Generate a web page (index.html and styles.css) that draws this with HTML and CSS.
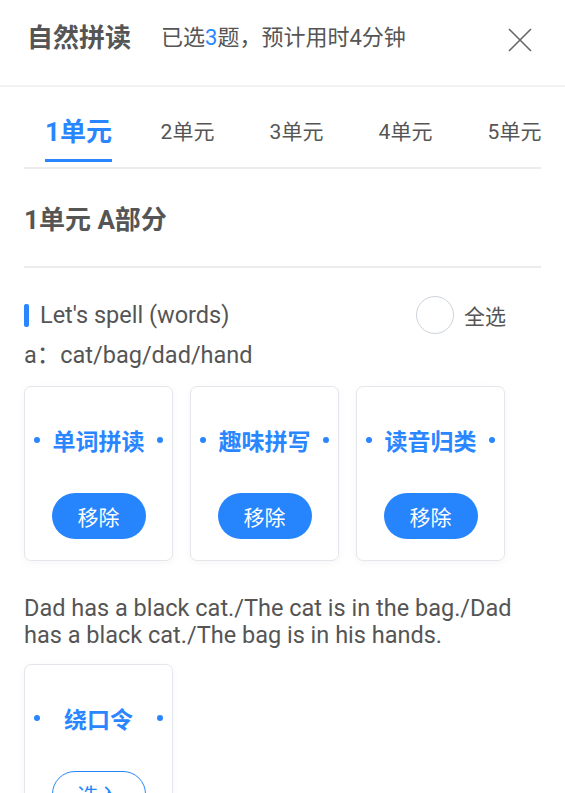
FILE: index.html
```
<!DOCTYPE html>
<html lang="zh">
<head>
<meta charset="utf-8">
<link rel="stylesheet" href="styles.css">
</head>
<body>
<div class="page">
  <header class="header">
    <h1 class="title">自然拼读</h1>
    <div class="sub">已选<span class="num">3</span>题，预计用时4分钟</div>
    <svg class="close" width="24" height="24" viewBox="0 0 24 24"><path d="M1 1 L23 23 M23 1 L1 23" stroke="#666" stroke-width="1.6" fill="none"/></svg>
  </header>
  <main class="content">
    <nav class="tabs">
      <div class="tab active"><span>1单元</span></div>
      <div class="tab"><span>2单元</span></div>
      <div class="tab"><span>3单元</span></div>
      <div class="tab"><span>4单元</span></div>
      <div class="tab"><span>5单元</span></div>
    </nav>
    <h2 class="section">1单元 A部分</h2>
    <div class="group-head">
      <div class="group-title"><i class="bar"></i>Let's spell (words)</div>
      <label class="all"><i class="radio"></i>全选</label>
    </div>
    <p class="desc">a：cat/bag/dad/hand</p>
    <div class="cards">
      <div class="card"><div class="card-title"><i class="dot"></i><span>单词拼读</span><i class="dot"></i></div><div class="btn">移除</div></div>
      <div class="card"><div class="card-title"><i class="dot"></i><span>趣味拼写</span><i class="dot"></i></div><div class="btn">移除</div></div>
      <div class="card"><div class="card-title"><i class="dot"></i><span>读音归类</span><i class="dot"></i></div><div class="btn">移除</div></div>
    </div>
    <p class="desc sentence">Dad has a black cat./The cat is in the bag./Dad has a black cat./The bag is in his hands.</p>
    <div class="cards cards-second">
      <div class="card"><div class="card-title"><i class="dot"></i><span>绕口令</span><i class="dot"></i></div><div class="btn outline">选入</div></div>
    </div>
  </main>
</div>
</body>
</html>
```

FILE: styles.css
```
* { box-sizing: border-box; }
html, body { margin: 0; padding: 0; background: #fff; }
body { font-family: Roboto, "Noto Sans CJK SC", sans-serif; color: #555; overflow: hidden; }
.page { width: 565px; height: 793px; overflow: hidden; }
.header {
  height: 87px;
  display: flex;
  align-items: center;
  padding: 0 33px 10px 27px;
  border-bottom: 2px solid #f2f2f2;
}
.title { margin: 0; font-size: 26px; line-height: 32px; font-weight: bold; color: #555; }
.sub { margin-left: 30px; font-size: 22px; line-height: 30px; color: #555; flex: 1; }
.num { color: #2a86ff; }
.close { display: block; margin-top: 5px; }
.content { padding: 0 24px; }
.tabs {
  display: flex;
  height: 82px;
  border-bottom: 2px solid #ececec;
  overflow: hidden;
  padding-top: 29px;
}
.tab { flex: 0 0 109px; display: flex; justify-content: center; font-size: 21px; color: #555; }
.tab span { display: block; height: 46px; line-height: 32px; white-space: nowrap; }
.tab.active span { color: #2a86ff; font-weight: bold; font-size: 26px; border-bottom: 3px solid #2a86ff; }
.section {
  margin: 0;
  height: 99px;
  display: flex;
  align-items: center;
  font-size: 26px;
  font-weight: bold;
  color: #555;
  border-bottom: 2px solid #ececec;
}
.group-head { display: flex; align-items: center; justify-content: space-between; margin-top: 28px; padding-right: 35px; }
.group-title { display: flex; align-items: center; font-size: 23.5px; color: #555; }
.bar { display: block; width: 5px; height: 23px; background: #2a86ff; border-radius: 2px; margin-right: 11px; }
.all { display: flex; align-items: center; font-size: 21px; color: #555; }
.radio { display: block; width: 38px; height: 38px; border: 1.5px solid #cdd3da; border-radius: 50%; margin-right: 10px; }
.desc { margin: 8px 0 0; font-size: 23.5px; line-height: 27px; color: #555; }
.cards { display: flex; gap: 17px; margin-top: 17px; }
.cards-second { margin-top: 15px; }
.card {
  width: 149px; height: 175px;
  border: 1px solid #e3e6eb;
  border-radius: 7px;
  box-shadow: 0 2px 8px rgba(0,0,0,0.04);
  display: flex; flex-direction: column; align-items: center;
  padding-top: 38px;
}
.card-title { width: 100%; display: flex; align-items: center; justify-content: space-between; padding: 0 9px; font-size: 23px; font-weight: bold; color: #2a86ff; height: 30px; }
.dot { display: block; width: 6px; height: 6px; border-radius: 50%; background: #2a86ff; }
.btn { margin-top: 38px; width: 94px; height: 46px; border-radius: 23px; background: #2685fc; color: #fff; font-size: 21px; display: flex; align-items: center; justify-content: center; }
.btn.outline { background: #fff; border: 1.5px solid #2685fc; color: #2685fc; }
.sentence { margin-top: 34px; }
```
